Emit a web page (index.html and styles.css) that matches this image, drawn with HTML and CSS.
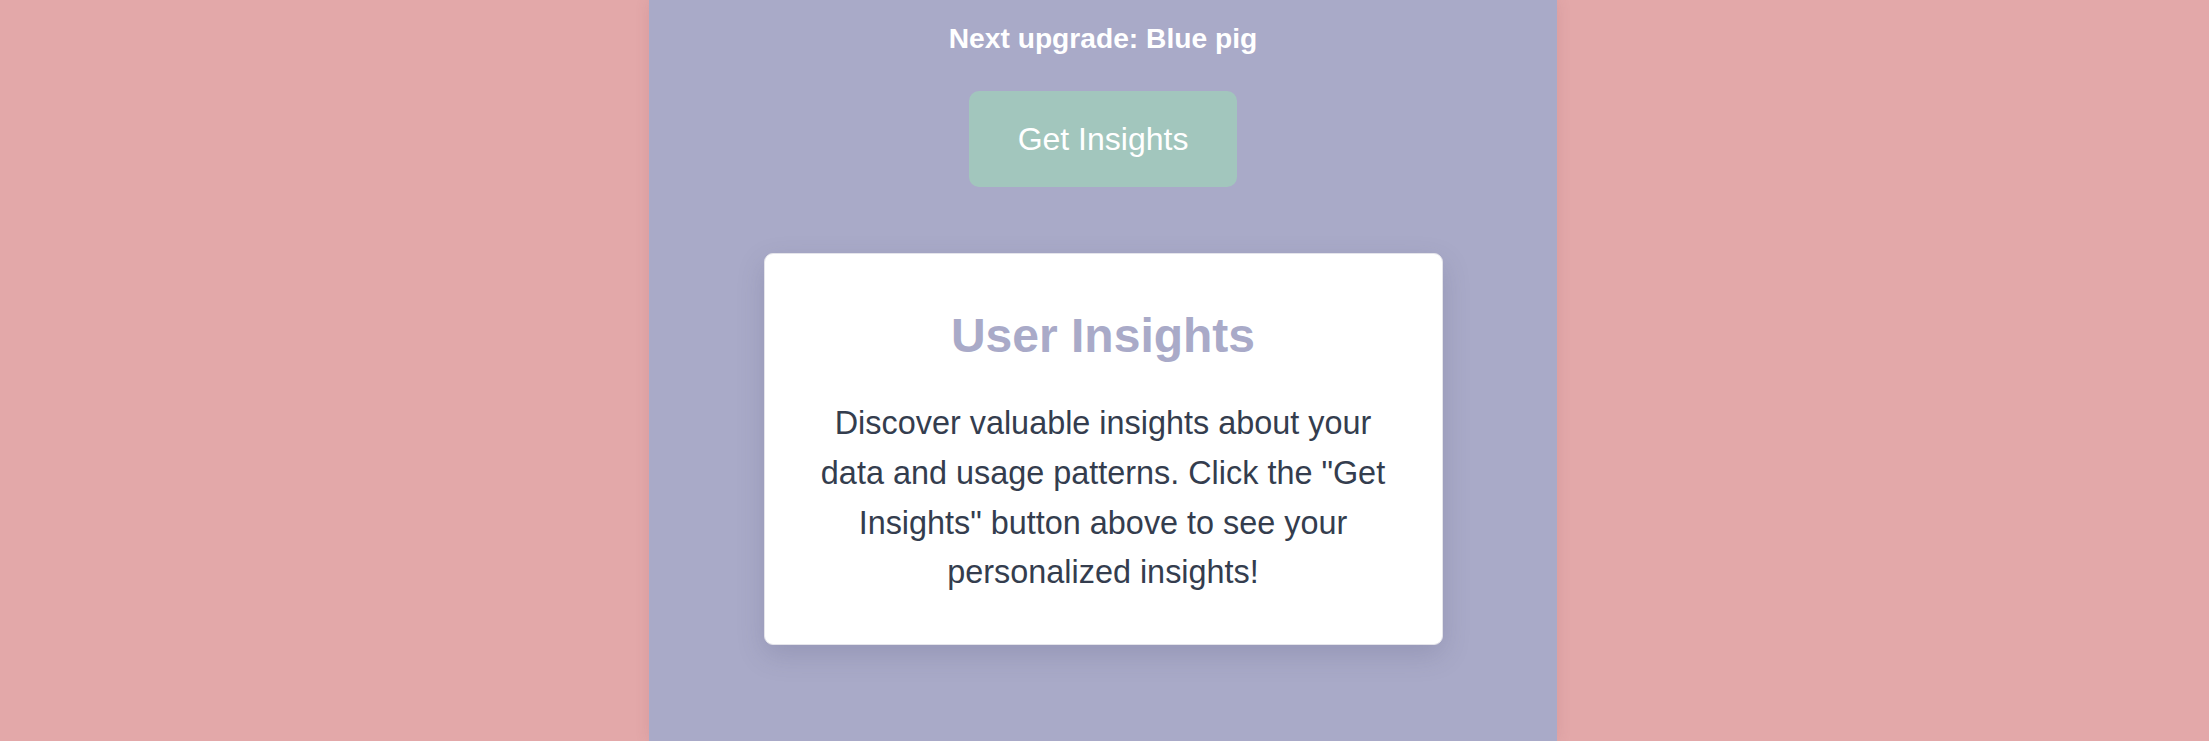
FILE: index.html
```html
<!DOCTYPE html>
<html lang="en">
<head>
<meta charset="utf-8">
<title>User Insights</title>
<link rel="stylesheet" href="styles.css">
</head>
<body>
<main class="column">
  <p class="upgrade">Next upgrade: Blue pig</p>
  <button class="insights-btn" type="button">Get Insights</button>
  <section class="card">
    <h2 class="card-title">User Insights</h2>
    <p class="card-text">Discover valuable insights about your data and usage patterns. Click the "Get Insights" button above to see your personalized insights!</p>
  </section>
</main>
</body>
</html>
```

FILE: styles.css
```css
html, body {
  margin: 0;
  padding: 0;
}

body {
  background: #e3a8a9;
  font-family: "Liberation Sans", Arial, sans-serif;
  min-height: 100vh;
  padding-right: 3px;
}

.column {
  width: 908px;
  margin: 0 auto;
  min-height: 100vh;
  background: #a9aac8;
  box-shadow: 0 0 14px rgba(120, 60, 70, 0.12);
  display: flex;
  flex-direction: column;
  align-items: center;
  padding-top: 22px;
  box-sizing: border-box;
}

.upgrade {
  margin: 0;
  color: #ffffff;
  font-weight: bold;
  font-size: 28.2px;
  line-height: 32px;
}

.insights-btn {
  margin-top: 37px;
  background: #a2c6bd;
  color: #ffffff;
  border: none;
  border-radius: 10px;
  font-family: "Liberation Sans", Arial, sans-serif;
  font-size: 32px;
  line-height: 36px;
  padding: 30px 49px;
  cursor: pointer;
}

.card {
  margin-top: 66px;
  width: 679px;
  box-sizing: border-box;
  background: #ffffff;
  border: 1px solid #e4e4ea;
  border-radius: 9px;
  box-shadow: 0 10px 28px rgba(60, 60, 100, 0.18);
  padding: 54px 48px 46px;
  text-align: center;
}

.card-title {
  margin: 0;
  color: #a9aac8;
  font-size: 48px;
  font-weight: bold;
  line-height: 55px;
}

.card-text {
  margin: 36px 0 0;
  color: #343d4e;
  font-size: 32.4px;
  line-height: 49.8px;
}
```
